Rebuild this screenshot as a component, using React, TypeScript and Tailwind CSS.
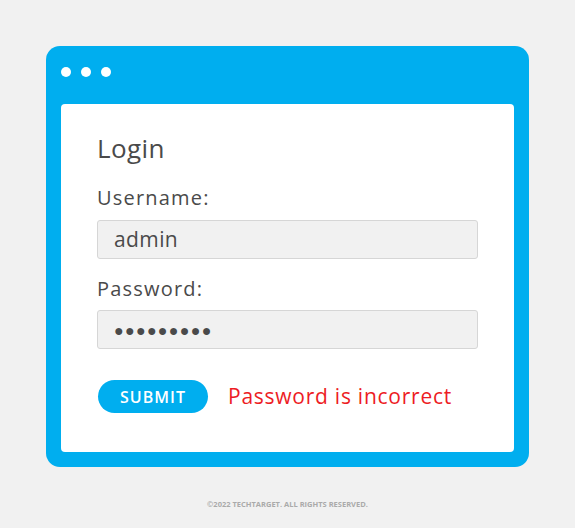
import React from 'react';

const font = { fontFamily: '"Open Sans", "Noto Sans", sans-serif' };

export default function App() {
  return (
    <div className="min-h-[528px] w-[575px] bg-[#f1f1f1] pt-[46px]" style={font}>
      <div className="mx-[46px] w-[483px] rounded-[14px] bg-[#00aeef] px-[15px] pb-[15px]">
        <div className="flex h-[58px] items-center gap-[10px] pb-[6px]">
          <span className="h-[10px] w-[10px] rounded-full bg-white" />
          <span className="h-[10px] w-[10px] rounded-full bg-white" />
          <span className="h-[10px] w-[10px] rounded-full bg-white" />
        </div>
        <div className="h-[348px] rounded-[4px] bg-white px-[36px] pt-[26px]">
          <h1 className="text-[26px] leading-[36px] tracking-[0.4px] text-[#4a4a4a]">Login</h1>
          <label className="mt-[18px] block text-[20px] leading-[28px] tracking-[1.2px] text-[#4a4a4a]">Username:</label>
          <div className="mt-[8px] flex h-[39px] w-[381px] items-center rounded-[3px] border border-[#d6d6d6] bg-[#f1f1f1] pl-[16px] text-[21px] tracking-[0.4px] text-[#4a4a4a]">
            admin
          </div>
          <label className="mt-[16px] block text-[20px] leading-[28px] tracking-[1.2px] text-[#4a4a4a]">Password:</label>
          <div className="mt-[7px] flex h-[39px] w-[381px] items-center rounded-[3px] border border-[#d6d6d6] bg-[#f1f1f1] pl-[16px] text-[16px] tracking-[1.3px] text-[#4a4a4a]">
            ●●●●●●●●●
          </div>
          <div className="mt-[31px] flex items-center gap-[20px]">
            <button className="ml-[1px] flex h-[33px] w-[110px] items-center justify-center rounded-full bg-[#00aeef] text-[16px] font-semibold tracking-[1px] text-white">
              SUBMIT
            </button>
            <span className="text-[21px] tracking-[0.75px] text-[#ed1c24]">Password is incorrect</span>
          </div>
        </div>
      </div>
      <p className="mt-[32px] text-center text-[7.5px] font-bold tracking-[0px] text-[#aaaaaa]">©2022 TECHTARGET. ALL RIGHTS RESERVED.</p>
    </div>
  );
}
